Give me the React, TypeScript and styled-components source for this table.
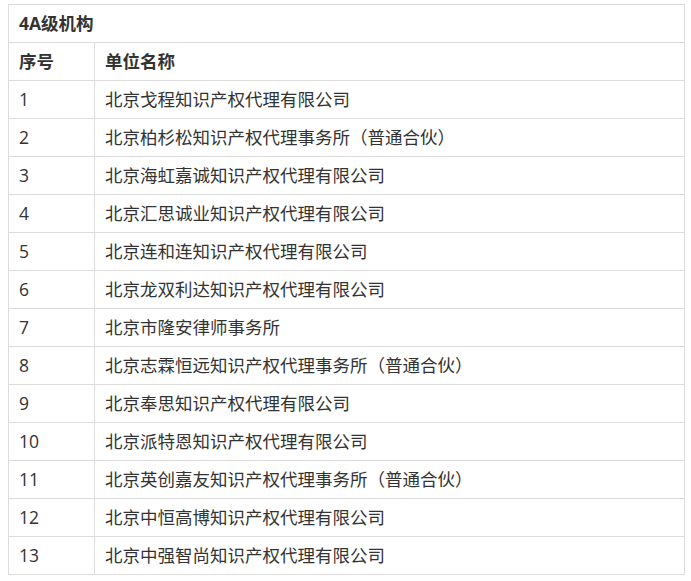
import styled, { createGlobalStyle } from "styled-components";

const GlobalStyle = createGlobalStyle`
  body {
    margin: 0;
    padding: 4px 7px 0 8px;
    background: #fff;
    font-family: "Open Sans", "Noto Sans CJK SC", sans-serif;
    color: #333;
  }
`;

const Table = styled.table`
  width: 677px;
  border-collapse: collapse;
  font-size: 17.5px;
`;

const Cell = styled.td<{ $bold?: boolean; $narrow?: boolean }>`
  border: 1px solid #dcdcdc;
  height: 38px;
  box-sizing: border-box;
  padding: 0 10px;
  text-align: left;
  vertical-align: middle;
  font-weight: ${(p) => (p.$bold ? 700 : 400)};
  width: ${(p) => (p.$narrow ? "86px" : "auto")};
  line-height: 1;
`;

const rows = [
  "北京戈程知识产权代理有限公司",
  "北京柏杉松知识产权代理事务所（普通合伙）",
  "北京海虹嘉诚知识产权代理有限公司",
  "北京汇思诚业知识产权代理有限公司",
  "北京连和连知识产权代理有限公司",
  "北京龙双利达知识产权代理有限公司",
  "北京市隆安律师事务所",
  "北京志霖恒远知识产权代理事务所（普通合伙）",
  "北京奉思知识产权代理有限公司",
  "北京派特恩知识产权代理有限公司",
  "北京英创嘉友知识产权代理事务所（普通合伙）",
  "北京中恒高博知识产权代理有限公司",
  "北京中强智尚知识产权代理有限公司",
];

export default function App() {
  return (
    <>
      <GlobalStyle />
      <Table>
        <tbody>
          <tr>
            <Cell colSpan={2} $bold>
              4A级机构
            </Cell>
          </tr>
          <tr>
            <Cell $bold $narrow>
              序号
            </Cell>
            <Cell $bold>单位名称</Cell>
          </tr>
          {rows.map((name, i) => (
            <tr key={name}>
              <Cell $narrow>{i + 1}</Cell>
              <Cell>{name}</Cell>
            </tr>
          ))}
        </tbody>
      </Table>
    </>
  );
}
